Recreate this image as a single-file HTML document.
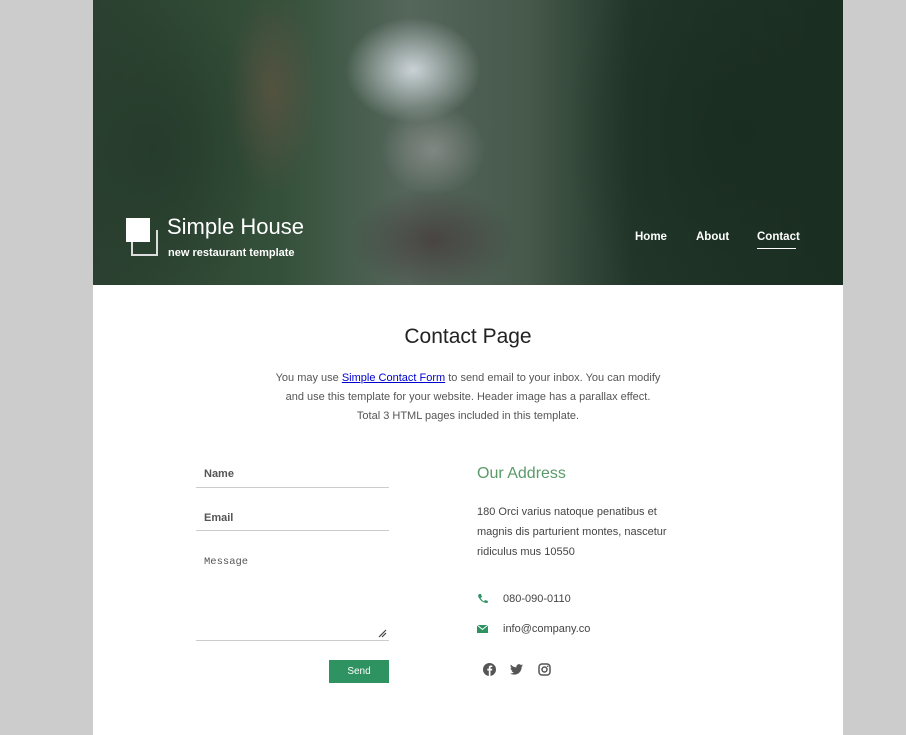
<!DOCTYPE html>
<html><head><meta charset="utf-8"><style>
*{box-sizing:border-box;margin:0;padding:0}
body{width:906px;height:735px;background:#ccc;font-family:"Liberation Sans",sans-serif;position:relative;overflow:hidden}
.wrap{position:absolute;left:93px;top:0;width:750px;height:735px;background:#fff}
.hero{position:absolute;left:0;top:0;width:750px;height:285px;overflow:hidden;
background:
radial-gradient(ellipse 90px 70px at 320px 70px,rgba(215,222,228,.9),transparent 75%),
radial-gradient(ellipse 70px 60px at 340px 150px,rgba(160,160,160,.6),transparent 75%),
radial-gradient(ellipse 110px 70px at 340px 240px,rgba(70,60,60,.8),transparent 75%),
radial-gradient(ellipse 60px 140px at 180px 90px,rgba(110,85,70,.55),transparent 75%),
radial-gradient(ellipse 150px 200px at 60px 150px,#263b2b,transparent 80%),
radial-gradient(ellipse 220px 260px at 650px 130px,#1a2d21,transparent 80%),
linear-gradient(90deg,#2b4030 0%,#34503a 25%,#55665b 42%,#46594b 58%,#22372a 72%,#1b2e22 100%)}
.logo{position:absolute;left:33px;top:218px}
.sq1{position:absolute;left:0;top:0;width:24px;height:24px;background:#fff}
.sq2{position:absolute;left:5px;top:12px;width:27px;height:26px;border:2px solid #ddd;border-left:none;border-top:none}
.sq2:before{content:"";position:absolute;left:0;top:12px;width:2px;height:12px;background:#ddd}
.title{position:absolute;left:74px;top:214px;color:#fff;font-size:22px}
.sub{position:absolute;left:75px;top:247px;color:#fff;font-size:11px;font-weight:bold}
.nav{position:absolute;top:231px;color:#fff;font-size:11.5px;font-weight:bold}
.h{position:absolute;left:0;width:750px;text-align:center}
p.intro{top:369px;font-size:11px;color:#555;line-height:19px}
p.intro a{color:#00c;text-decoration:underline}
.field{position:absolute;left:103px;width:193px;border-bottom:1px solid #ccc;font-size:11px;color:#555;padding-left:8px}
.btn{position:absolute;left:236px;top:660px;width:60px;height:23px;background:#2e9361;color:#fff;font-size:10px;text-align:center;line-height:23px}
.addr{position:absolute;left:384px;color:#444;font-size:11px}
</style></head><body><div class="wrap">
<div class="hero">
<div class="logo"><div class="sq2"></div><div class="sq1"></div></div>
<div class="title">Simple House</div>
<div class="sub">new restaurant template</div>
<div class="nav" style="left:542px">Home</div>
<div class="nav" style="left:603px">About</div>
<div class="nav" style="left:664px">Contact<div style="width:39px;height:1px;background:#fff;margin-top:5px"></div></div>
</div>
<div class="h" style="top:325px;font-size:21px;color:#222">Contact Page</div>
<p class="h intro">You may use <a>Simple Contact Form</a> to send email to your inbox. You can modify<br>and use this template for your website. Header image has a parallax effect.<br>Total 3 HTML pages included in this template.</p>
<div class="field" style="top:467px;height:21px;font-weight:bold;padding-top:1px">Name</div>
<div class="field" style="top:511px;height:20px;font-weight:bold;padding-top:1px">Email</div>
<div class="field" style="top:554px;height:87px;font-family:'Liberation Mono',monospace;font-size:10.5px;padding-top:2px">Message
<svg style="position:absolute;right:2px;bottom:2px" width="9" height="9"><path d="M1 8L8 1M4 8L8 4" stroke="#444" stroke-width="1.2"/></svg></div>
<div class="btn">Send</div>
<div class="addr" style="top:465px;font-size:16px;color:#5a9a6a">Our Address</div>
<div class="addr" style="top:502px;line-height:20px">180 Orci varius natoque penatibus et<br>magnis dis parturient montes, nascetur<br>ridiculus mus 10550</div>
<svg class="addr" style="top:593px" width="11" height="11" viewBox="0 0 11 11"><path d="M2 1L4 1L5 4L3.5 5Q5 7.5 7 8.5L8 7L11 8L10.5 10Q4 10 1 3Z" fill="#2e9361"/></svg>
<div class="addr" style="top:593px;left:410px">080-090-0110</div>
<svg class="addr" style="top:625px" width="11" height="8"><rect width="11" height="8" fill="#2e9361"/><path d="M0 0L5.5 4.5L11 0" stroke="#fff" fill="none"/></svg>
<div class="addr" style="top:623px;left:410px">info@company.co</div>
<svg class="addr" style="top:663px;left:390px" width="13" height="13"><circle cx="6.5" cy="6.5" r="6.5" fill="#555"/><path d="M7.5 13V7.5H9L9.3 5.8H7.5V4.8Q7.5 4 8.4 4H9.3V2.6Q8.5 2.5 7.8 2.5Q5.8 2.5 5.8 4.6V5.8H4.3V7.5H5.8V13Z" fill="#fff"/></svg>
<svg class="addr" style="top:664px;left:417px" width="13" height="11" viewBox="0 0 24 20"><path d="M24 2.4a10 10 0 0 1-2.8.8A5 5 0 0 0 23.3.5a10 10 0 0 1-3.1 1.2A4.9 4.9 0 0 0 11.8 6 14 14 0 0 1 1.7.9a4.9 4.9 0 0 0 1.500 6.6A4.9 4.9 0 0 1 1 6.9a4.9 4.9 0 0 0 3.9 4.8 5 5 0 0 1-2.2.1 4.9 4.9 0 0 0 4.6 3.4A9.9 9.9 0 0 1 0 17.3 14 14 0 0 0 7.5 19.5c9.1 0 14-7.5 14-14v-.6A10 10 0 0 0 24 2.4z" fill="#555"/></svg>
<svg class="addr" style="top:663px;left:445px" width="13" height="13"><rect x="1" y="1" width="11" height="11" rx="3" fill="none" stroke="#555" stroke-width="1.5"/><circle cx="6.5" cy="6.5" r="2.5" fill="none" stroke="#555" stroke-width="1.5"/><circle cx="9.7" cy="3.3" r=".8" fill="#555"/></svg>
</div></body></html>
